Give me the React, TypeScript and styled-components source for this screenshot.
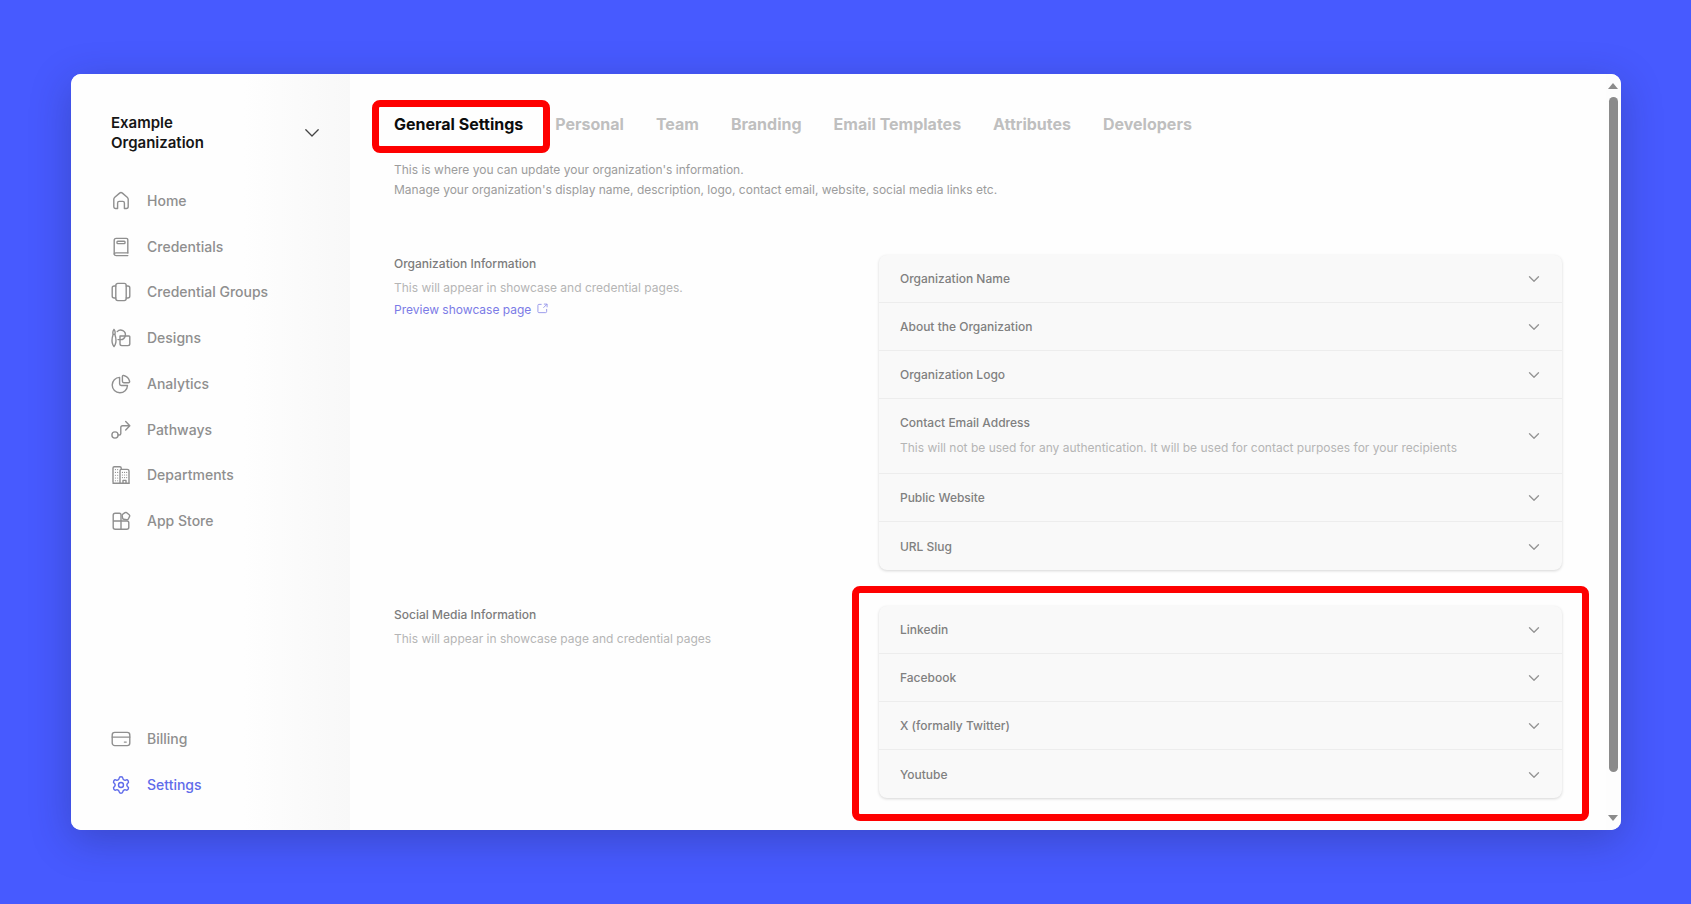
import React from "react";
import styled, { createGlobalStyle, css } from "styled-components";
import { Settings as GearIcon } from "lucide-react";

const GlobalStyle = createGlobalStyle`
  *, *::before, *::after { box-sizing: border-box; }
  body {
    margin: 0;
    background: #475aff;
    font-family: Inter, "Liberation Sans", sans-serif;
    color: #111;
  }
  h1, h2, p, ul { margin: 0; padding: 0; }
  ul { list-style: none; }
  button { font: inherit; color: inherit; border: 0; background: none; padding: 0; cursor: pointer; }
  a { color: inherit; text-decoration: none; }
`;

const Page = styled.div`
  min-height: 100vh;
  padding: 74px 70px 74px 71px;
  display: flex;
`;

const Window = styled.div`
  flex: 1;
  min-width: 0;
  display: flex;
  background: #fefefe;
  border-radius: 10px;
  overflow: hidden;
`;

const Shadow = styled.div`
  flex: 1;
  min-width: 0;
  display: flex;
  border-radius: 10px;
  box-shadow: 0 10px 40px rgba(24, 28, 60, 0.28);
`;

const Sidebar = styled.aside`
  width: 279px;
  flex: none;
  display: flex;
  flex-direction: column;
  padding: 39px 30px 33px 40px;
  background: linear-gradient(to right, #fefefe 62%, #f8f8f8 100%);
`;

const OrgSwitcher = styled.button`
  display: flex;
  align-items: center;
  justify-content: space-between;
  text-align: left;
  font-size: 15px;
  line-height: 20px;
  font-weight: 600;
  color: #161616;

  span { width: 120px; }
`;

const NavList = styled.ul`
  display: flex;
  flex-direction: column;
  justify-content: space-between;
  min-height: 344px;
  margin-top: 36px;
`;

const FooterList = styled.ul`
  display: flex;
  flex-direction: column;
  gap: 22px;
  margin-top: auto;
`;

const NavLink = styled.a<{ $active?: boolean }>`
  display: flex;
  align-items: center;
  gap: 16px;
  height: 24px;
  font-size: 14px;
  line-height: 24px;
  font-weight: 500;
  color: ${(p) => (p.$active ? "#5f6bea" : "#8f8f8f")};
`;

const NavIcon = styled.svg`
  width: 20px;
  height: 20px;
  flex: none;
  fill: none;
  stroke: currentColor;
  stroke-width: 1.4;
  stroke-linecap: round;
  stroke-linejoin: round;
`;

const Main = styled.main`
  flex: 1;
  min-width: 0;
  padding: 38px 44px 32px;
`;

const Tabs = styled.nav`
  display: flex;
  gap: 32px;
`;

const Tab = styled.a<{ $active?: boolean }>`
  position: relative;
  font-size: 16px;
  line-height: 24px;
  font-weight: 700;
  white-space: nowrap;
  color: ${(p) => (p.$active ? "#0c0c0c" : "#bfbfbf")};
`;

const highlight = css`
  position: absolute;
  border: 7px solid #fe0000;
  border-radius: 8px;
  pointer-events: none;
`;

const TabHighlight = styled.span`
  ${highlight}
  inset: -12px -27px -17px -22px;
`;

const PanelHighlight = styled.span`
  ${highlight}
  inset: -20px -27px -23px -27px;
`;

const Intro = styled.p`
  margin-top: 24px;
  font-size: 12px;
  line-height: 20px;
  color: #9c9c9c;
`;

const Section = styled.section`
  display: grid;
  grid-template-columns: minmax(0, 71fr) minmax(0, 100fr);
  margin-top: 36px;
`;

const FirstSection = styled(Section)`
  margin-top: 55px;
`;

const SectionTitle = styled.h2`
  font-size: 12px;
  line-height: 18px;
  font-weight: 500;
  color: #7c7c7c;
`;

const SectionNote = styled.p`
  margin-top: 5px;
  font-size: 12px;
  line-height: 20px;
  color: #b5b5b5;
`;

const PreviewLink = styled.a`
  display: inline-flex;
  align-items: center;
  gap: 6px;
  font-size: 12px;
  line-height: 20px;
  color: #7b7be6;

  svg { width: 11px; height: 11px; margin-bottom: 4px; opacity: 0.8; }
`;

const PanelWrap = styled.div`
  position: relative;
`;

const Panel = styled.div`
  border-radius: 8px;
  background: #f9f9f9;
  box-shadow: 0 1px 3px rgba(0, 0, 0, 0.16);
  overflow: hidden;
`;

const PanelRow = styled.button<{ $tall?: boolean }>`
  width: 100%;
  min-height: 48px;
  display: flex;
  align-items: center;
  justify-content: space-between;
  padding: ${(p) => (p.$tall ? "14px 22px 15px 21px" : "14px 22px 13px 21px")};
  text-align: left;
  font-size: 12px;
  line-height: 20px;
  font-weight: 500;
  color: #808080;
  border-bottom: 1px solid #ededed;

  &:last-child { border-bottom: 0; }
`;

const RowText = styled.span`
  display: flex;
  flex-direction: column;
  gap: 5px;

  small { font-size: 12px; line-height: 20px; font-weight: 400; color: #b5b5b5; }
`;

const ScrollBar = styled.div`
  width: 15px;
  flex: none;
  display: flex;
  flex-direction: column;
  align-items: center;
  padding: 9px 2px 9px 1px;
  background: #fdfdfd;

  svg { width: 10px; height: 6px; flex: none; fill: #8b8b8b; }
`;

const Track = styled.div`
  flex: 1;
  width: 9px;
  margin: 8px 0;
`;

const Thumb = styled.div`
  height: 95%;
  border-radius: 5px;
  background: #8b8b8b;
`;

const icons: Record<string, React.ReactNode> = {
  Home: (
    <path d="M2.8 8.3 C2.8 7.4 3.1 6.8 3.8 6.2 L8.6 2.1 C9.4 1.4 10.6 1.4 11.4 2.1 L16.2 6.2 C16.9 6.8 17.2 7.4 17.2 8.3 V15.6 C17.2 16.8 16.5 17.5 15.4 17.5 H13.4 V12 C13.4 11 12.8 10.4 11.8 10.4 H8.2 C7.2 10.4 6.6 11 6.6 12 V17.5 H4.6 C3.5 17.5 2.8 16.8 2.8 15.6 Z" />
  ),
  Credentials: (
    <>
      <path d="M16.8 15.9 V2.9 C16.8 1.9 16.3 1.4 15.3 1.4 H5.2 C4 1.4 3.2 2.2 3.2 3.4 V16.4 C3.2 17.8 3.9 18.6 5.2 18.6 H16.8" />
      <path d="M16.8 15.9 H4.8 C3.9 15.9 3.2 16.4 3.2 17" />
      <rect x="6" y="4.2" width="8" height="2.4" rx="0.8" />
    </>
  ),
  "Credential Groups": (
    <>
      <rect x="4.8" y="1.4" width="10.4" height="17.2" rx="2" />
      <path d="M4.8 4 H3.2 C1.8 4 1.2 4.7 1.2 6 V14 C1.2 15.3 1.8 16 3.2 16 H4.8 M15.2 4 H16.8 C18.2 4 18.8 4.7 18.8 6 V14 C18.8 15.3 18.2 16 16.8 16 H15.2" />
    </>
  ),
  Designs: (
    <>
      <path d="M3 1.4 C1.9 2.8 1.6 4 2 5.6 L2 7 C1 9.6 .8 12 1.2 14.6 C1.5 16.2 2.1 17.4 3 18.6 C3.9 17.4 4.5 16.2 4.8 14.6 C5.2 12 5 9.6 4 7 L4 5.6 C4.4 4 4.1 2.8 3 1.4 Z M2 6.4 H4" />
      <path d="M6.2 3.6 A4.7 4.7 0 0 1 14.2 8 M14.2 8 A4.7 4.7 0 0 1 9.4 11.6 M9.4 11.6 H7" />
      <path d="M9 8 H18 C18.5 8 18.8 8.3 18.8 8.8 V15.8 C18.8 17 18.2 17.6 17 17.6 H10.8 C9.6 17.6 9 17 9 15.8 Z" />
    </>
  ),
  Analytics: (
    <>
      <path d="M11.4 2.6 C11.4 1.7 12 1.2 12.9 1.5 C15.8 2.3 17.8 4.4 18.6 7.2 C18.8 8.1 18.3 8.7 17.4 8.7 H12.8 C11.9 8.7 11.4 8.2 11.4 7.3 Z" />
      <path d="M8.6 3.4 V9.8 C8.6 10.9 9.2 11.5 10.3 11.5 H16.5 C16.3 15.6 13 18.7 8.8 18.7 C4.6 18.7 1.2 15.4 1.2 11.1 C1.2 6.8 4.4 3.5 8.6 3.4 Z" />
    </>
  ),
  Pathways: (
    <>
      <circle cx="4" cy="15" r="3.1" />
      <path d="M7.1 15 H8.2 C9.3 15 9.8 14.4 9.8 13.4 V7.6 C9.8 6.4 10.5 5.8 11.6 5.8 H18.6 M14.7 1.6 L18.8 5.8 L14.7 10" />
    </>
  ),
  Departments: (
    <>
      <path d="M9 18.3 H3.2 C2.4 18.3 2 17.9 2 17.1 V3 C2 2.2 2.5 1.7 3.3 1.7 H8.8 C9.6 1.7 10.2 2.2 10.2 3 V4.4 M2 18.3 H18" />
      <path d="M9 18.3 V5.8 C9 5 9.5 4.4 10.4 4.4 H16.2 C17.4 4.4 18 5 18 6 V18.3" />
      <path
        strokeWidth="1.1"
        d="M4.4 4.6 h.1 M6.6 4.6 h.1 M4.4 7.4 h.1 M6.6 7.4 h.1 M4.4 10.2 h.1 M6.6 10.2 h.1 M4.4 13 h.1 M6.6 13 h.1 M4.4 15.7 h.1 M6.6 15.7 h.1 M11.4 7.4 h.1 M13.5 7.4 h.1 M15.6 7.4 h.1 M11.4 10 h.1 M13.5 10 h.1 M15.6 10 h.1 M11.4 12.6 h.1 M13.5 12.6 h.1 M15.6 12.6 h.1"
      />
      <path d="M12 18.3 V15.4 H15 V18.3" />
    </>
  ),
  "App Store": (
    <>
      <path d="M10 10 H2.2 V4.2 C2.2 2.9 2.9 2.2 4.2 2.2 H8.4 C9.4 2.2 10 2.8 10 3.8 Z M10 10 V18.2 H4.2 C2.9 18.2 2.2 17.5 2.2 16.2 V10 M10 10 H16 C17.2 10 17.8 10.7 17.8 11.8 V16.2 C17.8 17.5 17.1 18.2 15.8 18.2 H10" />
      <path d="M14 1.7 C14.6 1.3 15.1 1.3 15.7 1.7 L18.2 3.7 C18.8 4.2 18.9 4.8 18.6 5.4 L17.2 8.2 C16.9 8.7 16.4 8.9 15.8 8.8 L12.7 8.3 C12.1 8.2 11.7 7.8 11.6 7.2 L11.2 4.5 C11.1 3.9 11.3 3.4 11.8 3.1 Z" />
    </>
  ),
  Billing: (
    <>
      <rect x="1.2" y="3.4" width="17.6" height="13.2" rx="2.6" />
      <path d="M1.2 8.1 H18.8 M13.4 13.1 H15.2" />
    </>
  ),
  Settings: <GearIcon width={20} height={20} strokeWidth={1.7} />,
};

const Chevron = ({ large = false }: { large?: boolean }) => (
  <svg
    width={large ? 16 : 12}
    height={large ? 16 : 12}
    viewBox="0 0 16 16"
    fill="none"
    stroke={large ? "#444" : "#969696"}
    strokeWidth={large ? 1.3 : 1.8}
    strokeLinecap="round"
    strokeLinejoin="round"
    aria-hidden="true"
  >
    <path d={large ? "M1.8 4.8 L8 11 L14.2 4.8" : "M2 5 L8 11 L14 5"} />
  </svg>
);

const mainNav = ["Home", "Credentials", "Credential Groups", "Designs", "Analytics", "Pathways", "Departments", "App Store"];
const footerNav = ["Billing", "Settings"];
const tabs = ["General Settings", "Personal", "Team", "Branding", "Email Templates", "Attributes", "Developers"];

type RowData = { label: string; note?: string };

const organizationRows: RowData[] = [
  { label: "Organization Name" },
  { label: "About the Organization" },
  { label: "Organization Logo" },
  {
    label: "Contact Email Address",
    note: "This will not be used for any authentication. It will be used for contact purposes for your recipients",
  },
  { label: "Public Website" },
  { label: "URL Slug" },
];

const socialRows: RowData[] = [
  { label: "Linkedin" },
  { label: "Facebook" },
  { label: "X (formally Twitter)" },
  { label: "Youtube" },
];

const NavItem = ({ label }: { label: string }) => (
  <li>
    <NavLink href="#" $active={label === "Settings"}>
      <NavIcon viewBox="0 0 20 20" aria-hidden="true">{icons[label]}</NavIcon>
      {label}
    </NavLink>
  </li>
);

const Accordion = ({ rows }: { rows: RowData[] }) => (
  <Panel>
    {rows.map(({ label, note }) => (
      <PanelRow key={label} type="button" aria-expanded={false} $tall={Boolean(note)}>
        <RowText>
          {label}
          {note && <small>{note}</small>}
        </RowText>
        <Chevron />
      </PanelRow>
    ))}
  </Panel>
);

const App = () => (
  <>
    <GlobalStyle />
    <Page>
      <Shadow>
        <Window>
          <Sidebar>
            <OrgSwitcher type="button">
              <span>Example Organization</span>
              <Chevron large />
            </OrgSwitcher>
            <NavList>
              {mainNav.map((label) => <NavItem key={label} label={label} />)}
            </NavList>
            <FooterList>
              {footerNav.map((label) => <NavItem key={label} label={label} />)}
            </FooterList>
          </Sidebar>

          <Main>
            <Tabs>
              {tabs.map((label, index) => (
                <Tab key={label} href="#" $active={index === 0}>
                  {label}
                  {index === 0 && <TabHighlight />}
                </Tab>
              ))}
            </Tabs>
            <Intro>
              This is where you can update your organization's information.
              <br />
              Manage your organization's display name, description, logo, contact email, website, social media links etc.
            </Intro>

            <FirstSection>
              <div>
                <SectionTitle>Organization Information</SectionTitle>
                <SectionNote>This will appear in showcase and credential pages.</SectionNote>
                <PreviewLink href="#">
                  Preview showcase page
                  <svg viewBox="0 0 12 12" fill="none" stroke="currentColor" strokeWidth="1" aria-hidden="true">
                    <path d="M5 1.5 H2 C1.4 1.5 1 1.9 1 2.5 V9.5 C1 10.1 1.4 10.5 2 10.5 H9.5 C10.1 10.5 10.5 10.1 10.5 9.5 V6.5 M7.5 1.2 H11 V4.7 M11 1.2 L7 5.2" />
                  </svg>
                </PreviewLink>
              </div>
              <Accordion rows={organizationRows} />
            </FirstSection>

            <Section>
              <div>
                <SectionTitle>Social Media Information</SectionTitle>
                <SectionNote>This will appear in showcase page and credential pages</SectionNote>
              </div>
              <PanelWrap>
                <Accordion rows={socialRows} />
                <PanelHighlight />
              </PanelWrap>
            </Section>
          </Main>

          <ScrollBar aria-hidden="true">
            <svg viewBox="0 0 10 6"><path d="M0 6 L5 0 L10 6 Z" /></svg>
            <Track><Thumb /></Track>
            <svg viewBox="0 0 10 6"><path d="M0 0 L5 6 L10 0 Z" /></svg>
          </ScrollBar>
        </Window>
      </Shadow>
    </Page>
  </>
);

export default App;
